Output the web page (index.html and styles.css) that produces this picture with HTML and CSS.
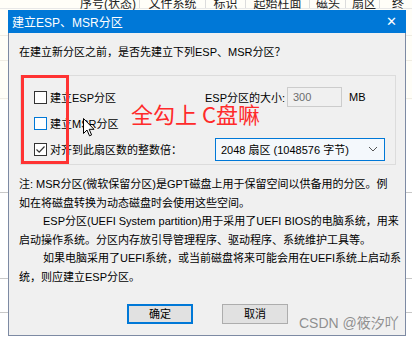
FILE: index.html
```html
<!DOCTYPE html>
<html lang="zh-CN">
<head>
    <meta charset="UTF-8">
    <title>建立ESP、MSR分区</title>
    <link rel="stylesheet" href="styles.css">
</head>
<body>
    <div class="desktop">
        <div class="table-head">
            <span class="col c1">序号(状态)</span>
            <span class="col c2">文件系统</span>
            <span class="col c3">标识</span>
            <span class="col c4">起始柱面</span>
            <span class="col c5">磁头</span>
            <span class="col c6">扇区</span>
            <span class="col c7">终</span>
        </div>
        <div class="row-line l1"></div>
        <div class="row-line l2"></div>
        <div class="row-line l3"></div>
        <div class="row-line l4 dark"></div>
        <div class="row-line l5 dark"></div>
        <div class="row-line l6 dark"></div>

        <div class="dialog">
            <div class="titlebar">
                <span class="title">建立ESP、MSR分区</span>
                <span class="close">✕</span>
            </div>
            <div class="body">
                <p class="prompt">在建立新分区之前，是否先建立下列ESP、MSR分区？</p>

                <div class="group">
                    <div class="row">
                        <label class="check"><span class="box"></span>建立ESP分区</label>
                        <span class="size-label">ESP分区的大小:</span>
                        <span class="size-input">300</span>
                        <span class="unit">MB</span>
                    </div>
                    <div class="row">
                        <label class="check"><span class="box hover"></span>建立MSR分区</label>
                    </div>
                    <div class="row">
                        <label class="check align"><span class="box checked">
                            <svg width="11" height="11" viewBox="0 0 11 11"><path d="M1.5 5.5 L4.2 8.2 L9.5 2.5" fill="none" stroke="#333" stroke-width="1.2"/></svg>
                        </span>对齐到此扇区数的整数倍：</label>
                        <span class="combo">2048 扇区 (1048576 字节)
                            <svg class="chev" width="10" height="6" viewBox="0 0 10 6"><path d="M1 1 L5 5 L9 1" fill="none" stroke="#555" stroke-width="1"/></svg>
                        </span>
                    </div>
                </div>

                <p class="note">注: MSR分区(微软保留分区)是GPT磁盘上用于保留空间以供备用的分区。例<br>如在将磁盘转换为动态磁盘时会使用这些空间。<br><span class="indent"></span>ESP分区(UEFI System partition)用于采用了UEFI BIOS的电脑系统，用来<br>启动操作系统。分区内存放引导管理程序、驱动程序、系统维护工具等。<br><span class="indent"></span>如果电脑采用了UEFI系统，或当前磁盘将来可能会用在UEFI系统上启动系<br>统，则应建立ESP分区。</p>

                <div class="buttons">
                    <button class="btn default">确定</button>
                    <button class="btn">取消</button>
                </div>
            </div>

            <!-- annotation drawn over the screenshot -->
            <div class="mark"></div>
            <div class="remark">全勾上 C盘嘛</div>
            <svg class="cursor" width="12" height="19" viewBox="0 0 12 19"><path d="M0.5 0.5 L0.5 15.5 L4 12 L6.5 17.8 L8.6 16.9 L6.2 11.3 L11 11.3 Z" fill="#fff" stroke="#000" stroke-width="1"/></svg>
            <div class="watermark">CSDN @筱汐吖</div>
        </div>
    </div>
</body>
</html>
```

FILE: styles.css
```css
body {
    margin: 0;
    font-family: "Liberation Sans", "Noto Sans CJK SC", sans-serif;
    font-size: 11px;
    color: #000;
}
.desktop {
    position: relative;
    width: 412px;
    height: 338px;
    overflow: hidden;
    background: linear-gradient(#fffef8 0, #fffef8 100px, #fff 100px);
}
.table-head {
    display: flex;
    height: 10px;
    line-height: 12px;
    margin-top: -2px;
    font-size: 12px;
    color: #222;
    border-bottom: 1px solid #e8e8e8;
}
.col {
    white-space: nowrap;
    padding: 0 6px;
    border-right: 1px solid #dcdcdc;
    box-sizing: border-box;
}
.c1 { margin-left: 74px; width: 66px; text-align: center; }
.c2 { width: 66px; text-align: center; }
.c3 { width: 40px; text-align: center; }
.c4 { width: 64px; text-align: center; }
.c5 { width: 36px; text-align: center; }
.c6 { width: 34px; text-align: center; }
.c7 { padding-left: 12px; border-right: none; }

.row-line {
    position: absolute;
    left: 0;
    right: 0;
    height: 1px;
    background: #f0ede4;
}
.row-line.dark { background: #c8c8c8; }
.l1 { top: 35px; }
.l2 { top: 60px; }
.l3 { top: 98px; }
.l4 { top: 192px; }
.l5 { top: 278px; }
.l6 { top: 312px; }

.dialog {
    position: absolute;
    left: 8px;
    top: 10px;
    width: 398px;
    height: 326px;
    box-sizing: border-box;
    border: 1px solid #7d8aa3;
    border-top: none;
    background: #f0f0f0;
}
.titlebar {
    display: flex;
    align-items: center;
    justify-content: space-between;
    height: 23px;
    margin: 0 -1px;
    padding: 0 9px 0 4px;
    background: #0078d7;
    color: #fff;
}
.title { font-size: 12px; }
.close { font-size: 13px; }

.body {
    padding: 0 0 0 10px;
}
.prompt {
    margin: 10px 0 0;
    line-height: 18px;
    white-space: nowrap;
}

.group {
    margin: 14px 9px 0 1px;
    height: 90px;
    box-sizing: border-box;
    border: 1px solid #dcdcdc;
    padding: 8px 0 0 13px;
}
.row {
    display: flex;
    align-items: center;
    height: 26px;
}
.check {
    display: flex;
    align-items: center;
    width: 171px;
    white-space: nowrap;
}
.check.align { width: 181px; }
.box {
    display: inline-flex;
    align-items: center;
    justify-content: center;
    width: 13px;
    height: 13px;
    box-sizing: border-box;
    border: 1px solid #333;
    background: #fff;
    margin-right: 3px;
}
.box.hover { border-color: #0078d7; }
.size-label { width: 82px; white-space: nowrap; }
.size-input {
    width: 55px;
    height: 20px;
    box-sizing: border-box;
    border: 1px solid #cccccc;
    color: #6d6d6d;
    line-height: 18px;
    padding-left: 5px;
}
.unit { margin-left: 7px; }
.combo {
    display: flex;
    align-items: center;
    justify-content: space-between;
    width: 170px;
    height: 23px;
    box-sizing: border-box;
    border: 1px solid #0078d7;
    background: #f4f8fc;
    padding: 0 6px 0 5px;
    white-space: nowrap;
}

.note {
    margin: 10px 0 0;
    line-height: 18.5px;
    white-space: nowrap;
}
.indent {
    display: inline-block;
    width: 24px;
}

.buttons {
    display: flex;
    gap: 29px;
    margin: 18px 0 0 108px;
}
.btn {
    width: 66px;
    height: 20px;
    box-sizing: border-box;
    border: 1px solid #adadad;
    background: #e1e1e1;
    font-family: inherit;
    font-size: 11px;
    padding: 0;
    line-height: 16px;
}
.btn.default { border: 2px solid #0078d7; }

.mark {
    position: absolute;
    left: 12px;
    top: 65px;
    width: 48px;
    height: 89px;
    box-sizing: border-box;
    border: 3px solid #f33;
}
.remark {
    position: absolute;
    left: 122px;
    top: 93px;
    color: #ff2a2a;
    font-family: "Noto Sans CJK SC", sans-serif;
    font-size: 22px;
    line-height: 20px;
    white-space: nowrap;
}
.cursor {
    position: absolute;
    left: 74px;
    top: 108px;
}
.watermark {
    position: absolute;
    left: 290px;
    top: 302px;
    color: rgba(110, 110, 110, 0.75);
    font-size: 14px;
    white-space: nowrap;
}
```
